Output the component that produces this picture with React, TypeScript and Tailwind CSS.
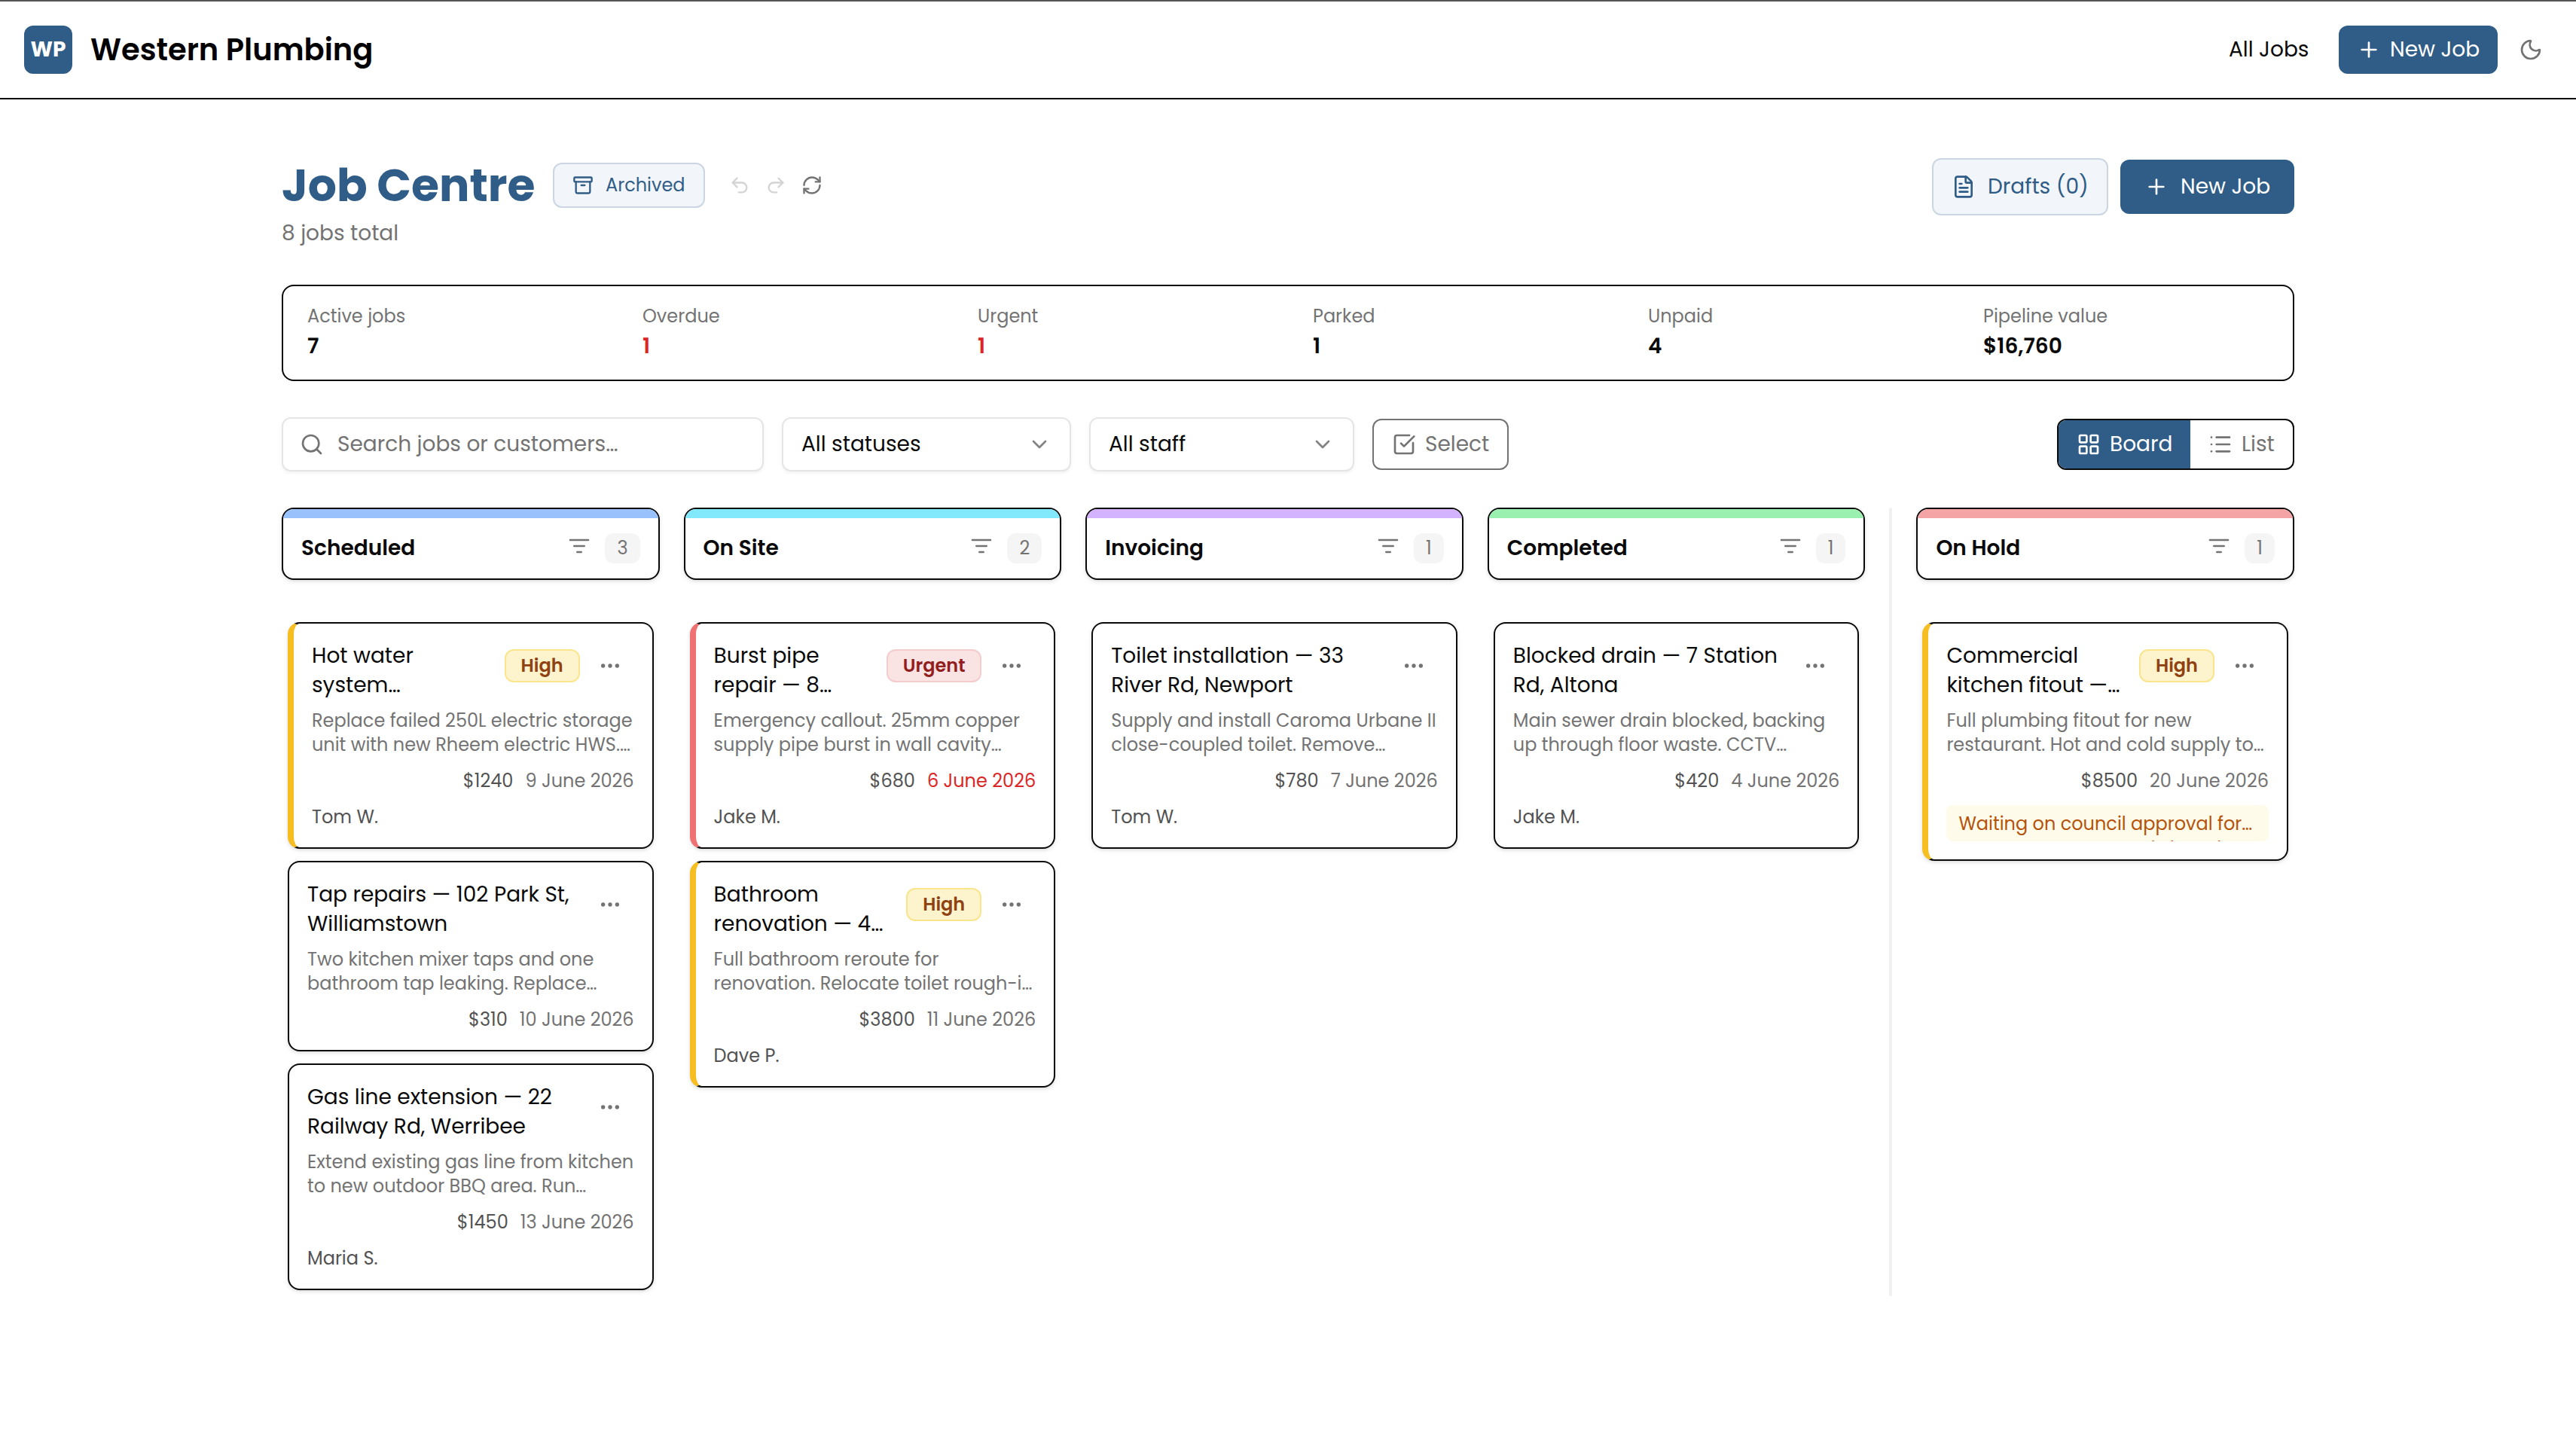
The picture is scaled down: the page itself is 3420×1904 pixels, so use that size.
import { useState } from "react";
import {
    Archive,
    ChevronDown,
    Ellipsis,
    FileText,
    LayoutGrid,
    List,
    Moon,
    Plus,
    Redo2,
    RefreshCw,
    Search,
    SquareCheckBig,
    Undo2,
} from "lucide-react";

type Priority = "High" | "Urgent";

type Job = {
    title: string;
    description: string;
    price: string;
    date: string;
    overdue?: boolean;
    staff?: string;
    priority?: Priority;
    note?: string;
};

type Column = {
    name: string;
    strip: string;
    jobs: Job[];
};

const STATS = [
    { label: "Active jobs", value: "7" },
    { label: "Overdue", value: "1", alert: true },
    { label: "Urgent", value: "1", alert: true },
    { label: "Parked", value: "1" },
    { label: "Unpaid", value: "4" },
    { label: "Pipeline value", value: "$16,760" },
];

const COLUMNS: Column[] = [
    {
        name: "Scheduled",
        strip: "bg-[#99c2fd]",
        jobs: [
            {
                title: "Hot water\nsystem…",
                description: "Replace failed 250L electric storage\nunit with new Rheem electric HWS.…",
                price: "$1240",
                date: "9 June 2026",
                staff: "Tom W.",
                priority: "High",
            },
            {
                title: "Tap repairs — 102 Park St,\nWilliamstown",
                description: "Two kitchen mixer taps and one\nbathroom tap leaking. Replace…",
                price: "$310",
                date: "10 June 2026",
            },
            {
                title: "Gas line extension — 22\nRailway Rd, Werribee",
                description: "Extend existing gas line from kitchen\nto new outdoor BBQ area. Run…",
                price: "$1450",
                date: "13 June 2026",
                staff: "Maria S.",
            },
        ],
    },
    {
        name: "On Site",
        strip: "bg-[#82e8fc]",
        jobs: [
            {
                title: "Burst pipe\nrepair — 8…",
                description: "Emergency callout. 25mm copper\nsupply pipe burst in wall cavity…",
                price: "$680",
                date: "6 June 2026",
                overdue: true,
                staff: "Jake M.",
                priority: "Urgent",
            },
            {
                title: "Bathroom\nrenovation — 4…",
                description: "Full bathroom reroute for\nrenovation. Relocate toilet rough-i…",
                price: "$3800",
                date: "11 June 2026",
                staff: "Dave P.",
                priority: "High",
            },
        ],
    },
    {
        name: "Invoicing",
        strip: "bg-[#d3b3fe]",
        jobs: [
            {
                title: "Toilet installation — 33\nRiver Rd, Newport",
                description: "Supply and install Caroma Urbane II\nclose-coupled toilet. Remove…",
                price: "$780",
                date: "7 June 2026",
                staff: "Tom W.",
            },
        ],
    },
    {
        name: "Completed",
        strip: "bg-[#9af0ae]",
        jobs: [
            {
                title: "Blocked drain — 7 Station\nRd, Altona",
                description: "Main sewer drain blocked, backing\nup through floor waste. CCTV…",
                price: "$420",
                date: "4 June 2026",
                staff: "Jake M.",
            },
        ],
    },
];

const ON_HOLD: Column = {
    name: "On Hold",
    strip: "bg-[#f4a4a4]",
    jobs: [
        {
            title: "Commercial\nkitchen fitout —…",
            description: "Full plumbing fitout for new\nrestaurant. Hot and cold supply to…",
            price: "$8500",
            date: "20 June 2026",
            priority: "High",
            note: "Waiting on council approval for…\ngrease trap. Expected Thursday.",
        },
    ],
};

const ACCENTS: Record<Priority, string> = {
    High: "border-l-8 border-l-[#f6be21]",
    Urgent: "border-l-8 border-l-[#f07171]",
};

const BADGES: Record<Priority, string> = {
    High: "w-[100px] bg-[#fdf3cc] border-[#fae58c] text-[#8f4112]",
    Urgent: "w-[126px] bg-[#f9e3e3] border-[#f5cccc] text-[#921d1d]",
};

function FilterIcon() {
    return (
        <svg
            viewBox="0 0 24 24"
            className="w-8 h-8 -mt-1.5 text-[#737373]"
            fill="none"
            stroke="currentColor"
            strokeWidth={2}
            strokeLinecap="round"
        >
            <path d="M3 6h18M7 12h10M10 18h4" />
        </svg>
    );
}

function JobCard({ job }: { job: Job }) {
    return (
        <div
            className={`bg-white rounded-2xl border-2 border-[#0a0a0a] p-6 shadow-[0_2px_6px_0_rgba(0,0,0,0.1),0_2px_4px_-2px_rgba(0,0,0,0.1)] ${
                job.priority ? ACCENTS[job.priority] : ""
            }`}
        >
            <div className="flex items-start justify-between">
                <h3 className="flex-1 min-w-0 whitespace-pre text-[28px] leading-[38.5px] text-[#0a0a0a]">
                    {job.title}
                </h3>
                <div className="flex items-center gap-2 shrink-0">
                    {job.priority && (
                        <span
                            className={`h-11 flex items-center justify-center rounded-xl border-2 text-2xl font-semibold ${BADGES[job.priority]}`}
                        >
                            {job.priority}
                        </span>
                    )}
                    <button type="button" className="w-16 h-16 flex items-center justify-center">
                        <Ellipsis className="w-8 h-8 text-[#737373]" />
                    </button>
                </div>
            </div>

            <p className="mt-3 whitespace-pre text-2xl leading-8 text-[#737373]">{job.description}</p>

            <div className="mt-4 flex justify-end gap-4 text-2xl leading-8">
                <span className="text-[#525252]">{job.price}</span>
                <span className={job.overdue ? "text-[#dc2626]" : "text-[#737373]"}>{job.date}</span>
            </div>

            {job.staff && <p className="mt-4 text-2xl leading-8 text-[#525252]">{job.staff}</p>}

            {/* The reason is clamped to the height of one line */}
            {job.note && (
                <p className="mt-4 h-12 px-4 pt-2 overflow-hidden rounded-lg bg-[#fffbeb] whitespace-pre text-2xl leading-[33px] text-[#b45309]">
                    {job.note}
                </p>
            )}
        </div>
    );
}

function BoardColumn({ column }: { column: Column }) {
    return (
        <section className="flex-1 min-w-0 pb-2">
            <div className="h-24 flex flex-col bg-white rounded-2xl border-2 border-[#0a0a0a] overflow-hidden shadow-[0_2px_6px_0_rgba(0,0,0,0.1),0_2px_4px_-2px_rgba(0,0,0,0.1)]">
                <div className={`h-3 shrink-0 ${column.strip}`} />
                <div className="flex-1 flex items-center px-6">
                    <h2 className="flex-1 text-[28px] leading-10 font-semibold text-[#0a0a0a]">{column.name}</h2>
                    <div className="flex items-center gap-[18px]">
                        <FilterIcon />
                        <span className="h-10 px-4 flex items-center rounded-xl bg-[#f5f5f5] text-2xl text-[#737373]">
                            {column.jobs.length}
                        </span>
                    </div>
                </div>
            </div>
            <div className="mt-14 px-2 flex flex-col gap-4">
                {column.jobs.map((job) => (
                    <JobCard key={job.title} job={job} />
                ))}
            </div>
        </section>
    );
}

export default function App() {
    const [view, setView] = useState<"board" | "list">("board");

    return (
        <div className="min-h-[1904px] bg-white text-[28px] leading-10 text-[#0a0a0a] font-['Poppins','Inter',sans-serif]">
            {/* Top bar */}
            <header className="h-[132px] flex items-center border-t-2 border-t-[#555555] border-b-2 border-b-[#0a0a0a] pl-8 pr-7">
                <div className="w-16 h-16 flex items-center justify-center rounded-xl bg-[#305d87] text-white font-bold">
                    WP
                </div>
                <span className="ml-6 text-[40px] leading-[56px] font-semibold text-black">Western Plumbing</span>
                <nav className="ml-auto flex items-center">
                    <a className="w-[106px] whitespace-nowrap">All Jobs</a>
                    <button
                        type="button"
                        className="ml-10 w-[211px] h-16 px-6 flex items-center gap-3 rounded-xl bg-[#305d87] text-white whitespace-nowrap"
                    >
                        <Plus className="w-8 h-8 shrink-0" />
                        New Job
                    </button>
                    <button type="button" className="ml-3 w-16 h-16 flex items-center justify-center">
                        <Moon className="w-8 h-8 text-[#737373]" />
                    </button>
                </nav>
            </header>

            <main className="w-[2672px] mx-auto pt-[78px]">
                {/* Page heading */}
                <div className="flex items-start justify-between">
                    <div>
                        <div className="h-[72px] flex items-center">
                            <h1 className="w-[336px] whitespace-nowrap text-[60px] leading-[72px] font-bold text-[#305d87]">
                                Job Centre
                            </h1>
                            <button
                                type="button"
                                className="ml-6 w-[202px] h-[60px] px-6 flex items-center gap-4 rounded-xl border-2 border-[#cbd6e2] bg-[#f2f5f9] text-2xl text-[#305d87]"
                            >
                                <Archive className="w-7 h-7 shrink-0" />
                                Archived
                            </button>
                            <div className="ml-[22px] flex text-[#737373]">
                                <button type="button" disabled className="w-12 h-12 flex items-center justify-center opacity-30">
                                    <Undo2 className="w-7 h-7" />
                                </button>
                                <button type="button" disabled className="w-12 h-12 flex items-center justify-center opacity-30">
                                    <Redo2 className="w-7 h-7" />
                                </button>
                                <button type="button" className="w-12 h-12 flex items-center justify-center">
                                    <RefreshCw className="w-7 h-7" />
                                </button>
                            </div>
                        </div>
                        <p className="mt-2 text-[#737373]">8 jobs total</p>
                    </div>
                    <div className="flex items-center gap-4">
                        <button
                            type="button"
                            className="w-[234px] h-[76px] px-6 flex items-center gap-4 rounded-xl border-2 border-[#cbd6e2] bg-[#f2f5f9] text-[#305d87] whitespace-nowrap"
                        >
                            <FileText className="w-8 h-8 shrink-0" />
                            Drafts (0)
                        </button>
                        <button
                            type="button"
                            className="w-[231px] h-[72px] px-8 flex items-center gap-4 rounded-xl bg-[#305d87] text-white whitespace-nowrap"
                        >
                            <Plus className="w-8 h-8 shrink-0" />
                            New Job
                        </button>
                    </div>
                </div>

                {/* Stats */}
                <div className="mt-12 h-32 px-8 py-6 grid grid-cols-6 gap-x-[66px] rounded-2xl border-2 border-[#0a0a0a]">
                    {STATS.map((stat) => (
                        <div key={stat.label}>
                            <p className="text-2xl leading-8 text-[#737373]">{stat.label}</p>
                            <p className={`mt-1 font-semibold ${stat.alert ? "text-[#dc2626]" : ""}`}>{stat.value}</p>
                        </div>
                    ))}
                </div>

                {/* Filters */}
                <div className="mt-12 flex items-center">
                    <div className="w-[640px] h-[72px] px-[22px] flex items-center gap-[18px] rounded-xl border-2 border-[#e5e5e5] text-[#737373] shadow-[0_2px_4px_0_rgba(0,0,0,0.06)]">
                        <Search className="w-8 h-8 shrink-0" />
                        <span>Search jobs or customers…</span>
                    </div>
                    <button
                        type="button"
                        className="ml-6 w-[384px] h-[72px] px-6 flex items-center justify-between rounded-xl border-2 border-[#e5e5e5] shadow-[0_2px_4px_0_rgba(0,0,0,0.06)]"
                    >
                        All statuses
                        <ChevronDown className="w-8 h-8 opacity-50" />
                    </button>
                    <button
                        type="button"
                        className="ml-6 w-[352px] h-[72px] px-6 flex items-center justify-between rounded-xl border-2 border-[#e5e5e5] shadow-[0_2px_4px_0_rgba(0,0,0,0.06)]"
                    >
                        All staff
                        <ChevronDown className="w-8 h-8 opacity-50" />
                    </button>
                    <button
                        type="button"
                        className="ml-6 w-[181px] h-[68px] px-6 flex items-center gap-3 rounded-xl border-2 border-[#737373] text-[#737373]"
                    >
                        <SquareCheckBig className="w-8 h-8 shrink-0" />
                        Select
                    </button>
                    <div className="ml-auto w-[315px] h-[68px] flex rounded-xl border-2 border-[#0a0a0a] overflow-hidden">
                        <button
                            type="button"
                            onClick={() => setView("board")}
                            className={`w-[175px] px-6 flex items-center gap-3 ${
                                view === "board" ? "bg-[#305d87] text-white" : "text-[#737373]"
                            }`}
                        >
                            <LayoutGrid className="w-8 h-8 shrink-0" />
                            Board
                        </button>
                        <button
                            type="button"
                            onClick={() => setView("list")}
                            className={`flex-1 px-6 flex items-center gap-3 ${
                                view === "list" ? "bg-[#305d87] text-white" : "text-[#737373]"
                            }`}
                        >
                            <List className="w-8 h-8 shrink-0" />
                            List
                        </button>
                    </div>
                </div>

                {/* Board */}
                <div className="mt-12 flex gap-8">
                    {COLUMNS.map((column) => (
                        <BoardColumn key={column.name} column={column} />
                    ))}
                    <div className="w-1 shrink-0 rounded-full bg-[#f0f0f0]" />
                    <BoardColumn column={ON_HOLD} />
                </div>
            </main>
        </div>
    );
}
